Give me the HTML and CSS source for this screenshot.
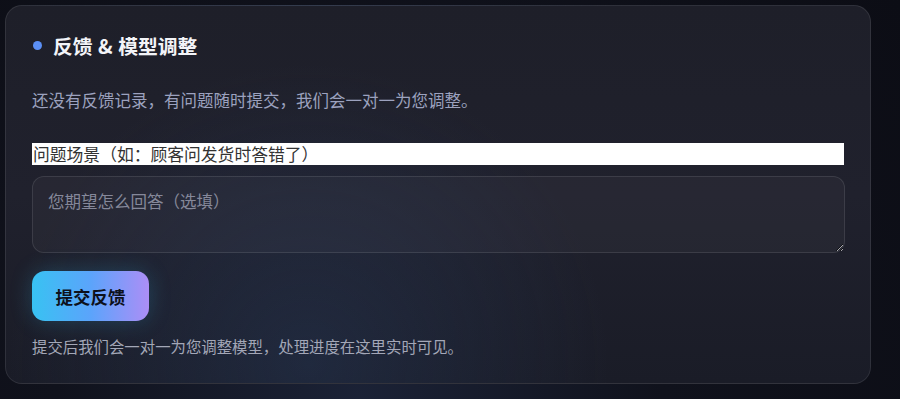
FILE: index.html
```html
<!DOCTYPE html>
<html lang="zh-CN">
<head>
    <meta charset="UTF-8">
    <meta name="viewport" content="width=device-width, initial-scale=1.0">
    <title>反馈 & 模型调整</title>
    <link rel="stylesheet" href="styles.css">
</head>
<body>
    <div class="card">
        <h2 class="card-title"><span class="dot"></span>反馈 &amp; 模型调整</h2>
        <p class="empty-note">还没有反馈记录，有问题随时提交，我们会一对一为您调整。</p>
        <input class="scene-input" type="text" placeholder="问题场景（如：顾客问发货时答错了）">
        <textarea class="answer-input" placeholder="您期望怎么回答（选填）"></textarea>
        <div class="actions">
            <button class="submit-btn">提交反馈</button>
        </div>
        <p class="hint">提交后我们会一对一为您调整模型，处理进度在这里实时可见。</p>
    </div>
</body>
</html>
```

FILE: styles.css
```css
body {
    margin: 0;
    height: 399px;
    overflow: hidden;
    background: radial-gradient(circle at 40% 100%, #1b2236 0%, #10121c 45%, #0c0d15 100%);
    font-family: "Noto Sans CJK SC", "Noto Sans", sans-serif;
}

.card {
    box-sizing: border-box;
    width: 866px;
    height: 379px;
    margin: 5px 0 0 5px;
    padding: 25px 26px 0 26px;
    border: 1px solid rgba(255, 255, 255, 0.09);
    border-radius: 17px;
    background:
        radial-gradient(circle at 35% 95%, rgba(40, 60, 95, 0.4) 0%, rgba(40, 60, 95, 0) 45%),
        linear-gradient(180deg, #1e1f29 0%, #20212d 50%, #1a1c27 100%);
    display: flex;
    flex-direction: column;
}

.card-title {
    margin: 0;
    display: flex;
    align-items: center;
    height: 28px;
    font-size: 19.8px;
    font-weight: 700;
    color: #f3f4f8;
    word-spacing: 1px;
}

.dot {
    width: 9px;
    height: 9px;
    border-radius: 50%;
    background: #5b8ff5;
    margin: 0 11px 0 1px;
}

.empty-note {
    margin: 28px 0 0 0;
    line-height: 26px;
    font-size: 16.5px;
    color: #9ca2bf;
}

.scene-input {
    margin-top: 30px;
    box-sizing: border-box;
    width: 812px;
    height: 22px;
    padding: 0 0 0 1px;
    border: none;
    background: #fff;
    font-family: inherit;
    font-size: 16.8px;
    line-height: 22px;
}

.scene-input::placeholder {
    color: #333;
}

.answer-input {
    margin-top: 11px;
    box-sizing: border-box;
    width: 813px;
    height: 77px;
    padding: 12px 15px;
    border: 1px solid rgba(255, 255, 255, 0.1);
    border-radius: 12px;
    background: rgba(255, 255, 255, 0.03);
    color: #e5e7ee;
    font-family: inherit;
    font-size: 16.5px;
    resize: vertical;
}

.answer-input::placeholder {
    color: #85889a;
}

.actions {
    margin-top: 18px;
}

.submit-btn {
    width: 117px;
    height: 50px;
    border: none;
    border-radius: 13px;
    background: linear-gradient(90deg, #38c2f2 0%, #5ba4fb 50%, #ac8ef6 100%);
    box-shadow: 0 0 22px rgba(56, 189, 248, 0.22);
    color: #0d111c;
    font-family: inherit;
    font-size: 17.5px;
    font-weight: 700;
    cursor: pointer;
}

.hint {
    margin: 13px 0 0 0;
    line-height: 24px;
    font-size: 15.4px;
    color: #a3a7b7;
}
```
